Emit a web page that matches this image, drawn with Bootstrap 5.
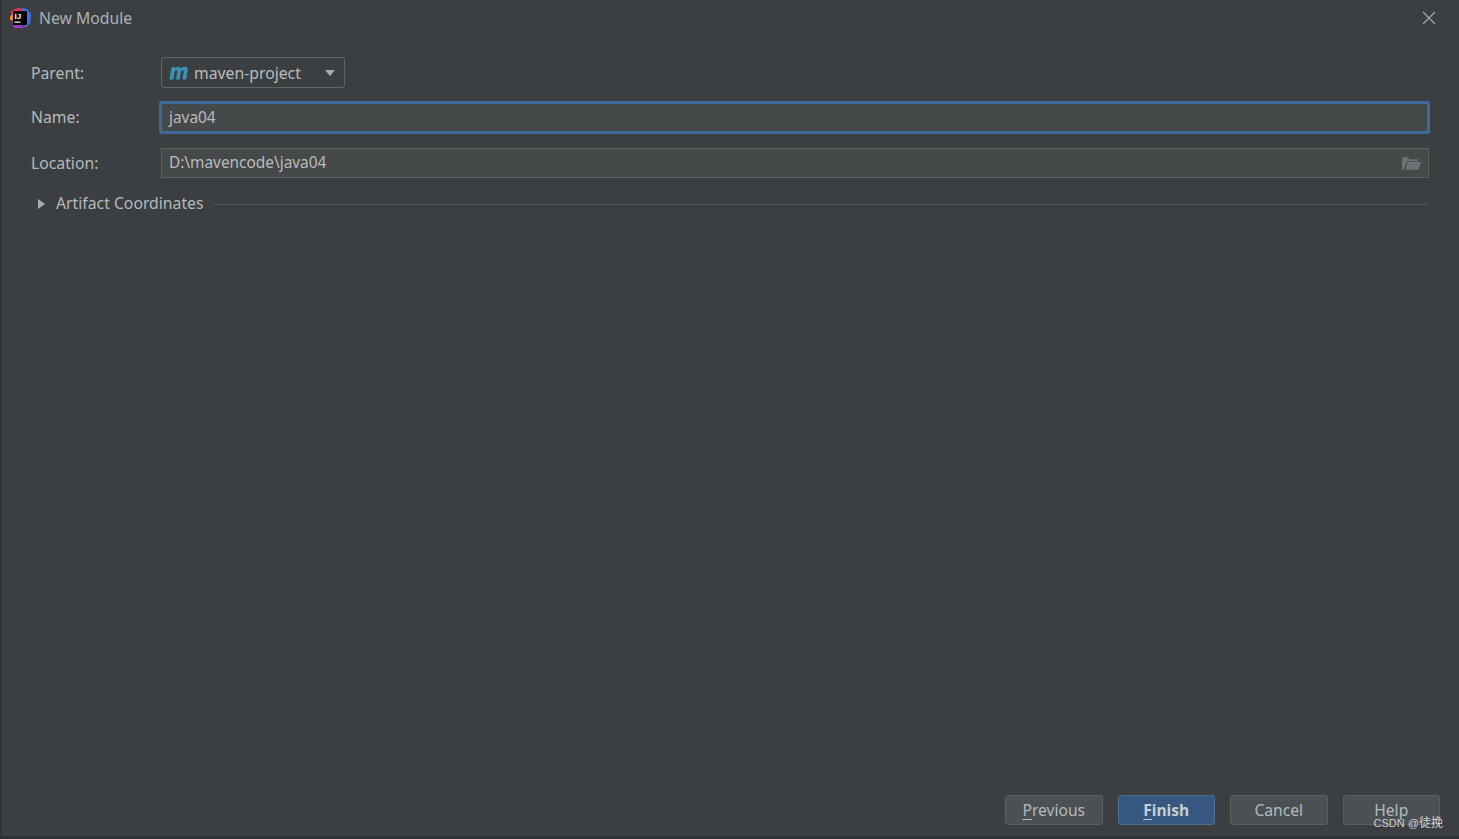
<!DOCTYPE html>
<html lang="en">
<head>
    <meta charset="UTF-8">
    <title>New Module</title>
    <link href="https://cdn.jsdelivr.net/npm/bootstrap@5.3.0/dist/css/bootstrap.min.css" rel="stylesheet">
    <style>
        html, body { height: 100%; }
        body {
            background: #3c3f41;
            color: #bbbbbb;
            font-family: "Noto Sans", "Open Sans", sans-serif;
            font-size: 15.75px;
            line-height: 20px;
            overflow: hidden;
        }
        .dlg {
            height: 839px;
            border-left: 1px solid #2b2d2f;
            border-bottom: 3px solid #2f3234;
        }
        .dlg-title { height: 36px; padding: 0 23px 0 8px; color: #a9b2b8; }
        .dlg-title .name { margin-left: 8px; }
        .dlg-body { padding: 21px 30px 0 30px; }
        .field-label { width: 130px; flex: none; color: #b4babd; }
        .field-label.up { padding-bottom: 2px; }
        .parent-box {
            width: 184px; height: 31px;
            border: 1px solid #646464; border-radius: 3px;
            padding: 0 8px 0 8px;
            background: #3c3f41;
        }
        .parent-box .proj { margin-left: 1px; }
        .caret-down {
            width: 0; height: 0; margin-left: auto; margin-right: 1px;
            border-left: 5.5px solid transparent;
            border-right: 5.5px solid transparent;
            border-top: 6px solid #a8acae;
        }
        .text-box {
            height: 30px;
            background: #45494a;
            border: 1px solid #5e6060;
            padding: 0 7px 0;
            font-size: 15.4px;
        }
        .text-box .val { margin-top: -1px; }
        .text-box.active {
            height: 33px;
            border: 3px solid #3d6a99;
            border-radius: 2px;
            padding: 0 7px 0;
            margin-left: -2px; margin-right: -1px;
        }
        .row-parent { height: 31px; margin-bottom: 13px; }
        .row-name { height: 33px; margin-bottom: 14px; }
        .row-loc { height: 30px; margin-bottom: 13px; }
        .artifact { height: 25px; padding-left: 7px; color: #b4babd; }
        .artifact .tri {
            width: 0; height: 0; margin-right: 11px; margin-top: 1px;
            border-top: 5px solid transparent;
            border-bottom: 5px solid transparent;
            border-left: 7px solid #a8acae;
        }
        .artifact .artifact-text { margin-top: -2px; }
        .artifact .rule { flex: 1; height: 1px; background: #515151; margin-left: 9px; margin-top: 2px; margin-right: 1px; }
        .dlg-foot { padding: 0 19px 11px 0; gap: 15px; }
        .dlg-btn {
            width: 97.5px; height: 30px; padding: 0;
            font-size: 15.6px; line-height: 26px;
            background: #4c5052; color: #b4babd;
            border: 1px solid #5e6060; border-radius: 3px;
        }
        .dlg-btn.primary {
            background: #365880; color: #c5ced6; font-weight: 700;
            border-color: #4c708c;
        }
        .dlg-btn u { text-underline-offset: 3px; }
        .watermark {
            position: absolute; right: 16px; bottom: 6px;
            font-family: "Liberation Sans", sans-serif;
            font-size: 11px; line-height: 14px; color: #d0d0d0;
        }
        .watermark .cjk { font-family: "Noto Sans CJK SC", sans-serif; font-size: 12px; }
    </style>
</head>
<body>
    <div class="dlg d-flex flex-column position-relative">
        <div class="dlg-title d-flex align-items-center">
            <svg width="22" height="22" viewBox="0 0 22 22">
                <path d="M2 4 L9 1 L15 2 L12 9 L5 13 L2 9Z" fill="#f0305f"/>
                <path d="M13 1 L18 2 L22 7 L21 17 L16 21 L13 12Z" fill="#3f6fe8"/>
                <path d="M1 9 L5 7 L6 14 L1 13Z" fill="#f58a1f"/>
                <path d="M3 15 L11 14 L15 21 L5 21Z" fill="#9a3fc0"/>
                <rect x="4" y="4" width="14" height="14" fill="#000"/>
                <text x="5.5" y="11.5" font-size="8" font-weight="700" fill="#fff" font-family="Liberation Sans, sans-serif">IJ</text>
                <rect x="5.5" y="14.5" width="6" height="1.2" fill="#fff"/>
            </svg>
            <span class="name">New Module</span>
            <svg class="ms-auto" width="14" height="14" viewBox="0 0 14 14"><path d="M1 1 L13 13 M13 1 L1 13" stroke="#a4a8aa" stroke-width="1.2" fill="none"/></svg>
        </div>
        <div class="dlg-body flex-grow-1">
            <div class="row-parent d-flex align-items-center">
                <div class="field-label">Parent:</div>
                <div class="parent-box d-flex align-items-center">
                    <svg width="20" height="14" viewBox="0 0 20 14" class="me-1" style="margin-left:-1px">
                        <path d="M0.5 13.5 L2.6 1 H6 L5.8 2.4 Q7.6 .6 9.7 .8 Q11.3 1 11.7 2.6 Q13.5 .6 15.8 .8 Q19.2 1.1 18.7 4.6 L17.2 13.5 H13.4 L14.8 5.6 Q15 4.2 13.8 4.2 Q12.4 4.2 12 5.8 L10.7 13.5 H7 L8.4 5.6 Q8.6 4.2 7.5 4.2 Q6 4.2 5.6 5.8 L4.3 13.5Z" fill="#3a90b5"/>
                    </svg>
                    <span class="proj">maven-project</span>
                    <span class="caret-down"></span>
                </div>
            </div>
            <div class="row-name d-flex align-items-center">
                <div class="field-label up">Name:</div>
                <div class="text-box active flex-grow-1 d-flex align-items-center"><span>java04</span></div>
            </div>
            <div class="row-loc d-flex align-items-center">
                <div class="field-label">Location:</div>
                <div class="text-box flex-grow-1 d-flex align-items-center">
                    <span class="val">D:\mavencode\java04</span>
                    <svg class="ms-auto" width="19" height="15" viewBox="0 0 20 15">
                        <path d="M0 14 V2 Q0 1 1 1 H6 L8 3 H17 V5 H5 L2 14Z" fill="#6e7274"/>
                        <path d="M3.5 14 L6 6 H20 L17 14Z" fill="#6e7274"/>
                    </svg>
                </div>
            </div>
            <div class="artifact d-flex align-items-center">
                <span class="tri"></span>
                <span class="artifact-text">Artifact Coordinates</span>
                <span class="rule"></span>
            </div>
        </div>
        <div class="dlg-foot d-flex justify-content-end">
            <button class="dlg-btn" type="button"><u>P</u>revious</button>
            <button class="dlg-btn primary" type="button"><u>F</u>inish</button>
            <button class="dlg-btn" type="button">Cancel</button>
            <button class="dlg-btn" type="button">Help</button>
        </div>
        <div class="watermark">CSDN @<span class="cjk">徒挽</span></div>
    </div>
    <script src="https://cdn.jsdelivr.net/npm/bootstrap@5.3.0/dist/js/bootstrap.bundle.min.js"></script>
</body>
</html>
